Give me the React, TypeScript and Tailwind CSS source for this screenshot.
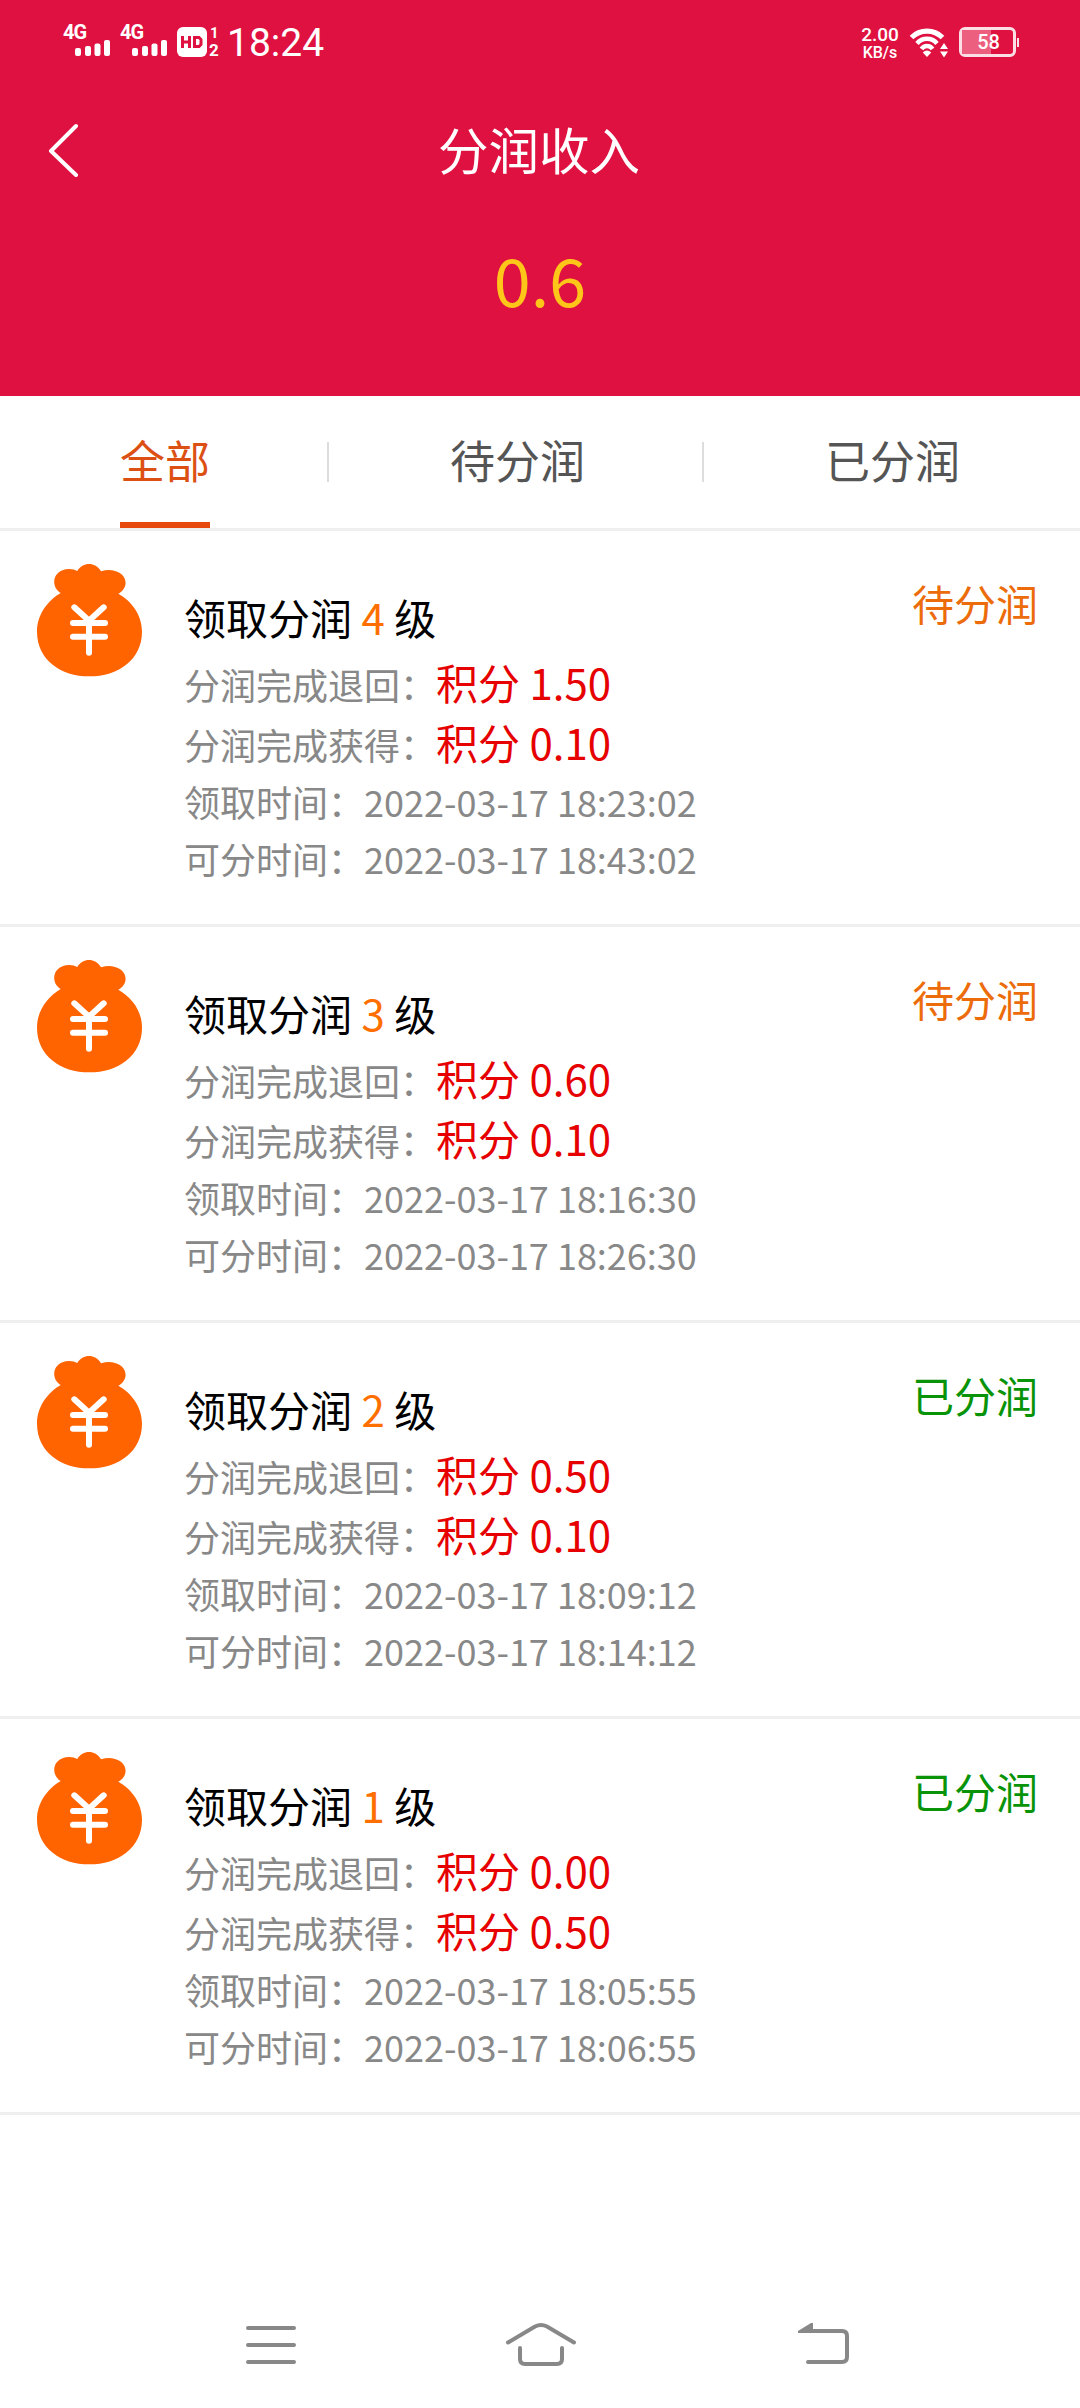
import clsx from 'clsx';

interface RecordItem {
  level: number;
  refund: string;
  reward: string;
  claimedAt: string;
  dueAt: string;
  settled: boolean;
}

const records: RecordItem[] = [
  { level: 4, refund: '1.50', reward: '0.10', claimedAt: '2022-03-17 18:23:02', dueAt: '2022-03-17 18:43:02', settled: false },
  { level: 3, refund: '0.60', reward: '0.10', claimedAt: '2022-03-17 18:16:30', dueAt: '2022-03-17 18:26:30', settled: false },
  { level: 2, refund: '0.50', reward: '0.10', claimedAt: '2022-03-17 18:09:12', dueAt: '2022-03-17 18:14:12', settled: true },
  { level: 1, refund: '0.00', reward: '0.50', claimedAt: '2022-03-17 18:05:55', dueAt: '2022-03-17 18:06:55', settled: true },
];

const tabs = ['全部', '待分润', '已分润'];

function Signal() {
  return (
    <div className="w-[57px] h-[34px] flex flex-col">
      <span className="h-[15px] text-[20px] leading-[15px] font-bold tracking-[-1px]">4G</span>
      <svg className="ml-3 w-9 h-[17px]" viewBox="0 0 36 17" fill="currentColor">
        <rect x="0" y="8" width="6" height="8" rx="2" />
        <rect x="10" y="6" width="6" height="10" rx="2" />
        <rect x="19.500" y="3.500" width="6" height="12.500" rx="2" />
        <rect x="29" y="0" width="6" height="16" rx="2" />
      </svg>
    </div>
  );
}

function StatusBar() {
  return (
    <div className="h-[84px] pl-[63px] pr-[61px] pt-[25px] flex items-start justify-between font-[Roboto,sans-serif]">
      <div className="flex items-start">
        <Signal />
        <Signal />
        <div className="mt-[2px] w-[30px] h-[30px] rounded-[6px] bg-white flex items-center justify-center">
          <svg className="w-[22px] h-[14px]" viewBox="0 0 22 14" fill="none" stroke="#df1140" strokeWidth="3">
            <path d="M1.500 1v12M8.500 1v12M1.500 7h7M13.500 2.500h4.500l2 2v5l-2 2h-4.500z" />
          </svg>
        </div>
        <div className="ml-[2px] w-[13px] flex flex-col text-[17px] leading-[17px] font-bold">
          <span className="pl-[1px] text-[15px]">1</span>
          <span>2</span>
        </div>
        <span className="ml-[5px] mt-[-4px] text-[39px] leading-[44px]">18:24</span>
      </div>
      <div className="flex items-start">
        <div className="w-[40px] mr-[9px] flex flex-col items-center font-medium">
          <span className="text-[19px] leading-[19px]">2.00</span>
          <span className="text-[16px] leading-[17px]">KB/s</span>
        </div>
        <svg className="w-10 h-[30px] mt-[3px] mr-2.5" viewBox="0 0 40 30" fill="none" stroke="currentColor">
          <path d="M2.500 9.500A22.200 22.200 0 0 1 33.500 9.500" strokeWidth="5.200" />
          <path d="M8 15.500A13 13 0 0 1 28 15.500M12.500 21A6.500 6.500 0 0 1 23.500 21" strokeWidth="4.400" />
          <path d="M18 29L13.800 24.500Q18 20.500 22.200 24.500Z" fill="currentColor" stroke="none" />
          <path d="M31 21l4-6 4 6zM31 23.500l4 6 4-6z" fill="currentColor" stroke="none" />
        </svg>
        <div className="mt-[2px] flex items-center">
          <div className="relative w-[57px] h-[30px] rounded-[6px] border-[3px] border-[#fbdfe5]">
            <div className="w-[29px] h-full bg-[#ec5f7f]" />
            <span className="absolute inset-0 pl-[2px] text-center text-[20px] leading-[25px] font-medium">58</span>
          </div>
          <div className="ml-[1px] w-[2px] h-[9px] bg-[#fbdfe5]" />
        </div>
      </div>
    </div>
  );
}

function MoneyBag() {
  return (
    <svg className="w-[107px] h-[114px] mt-[32px] flex-shrink-0" viewBox="108 98 321 342">
      <path
        d="M182 188C152 172 154 117 208 116Q222 116 232 122C248 94 286 94 303 123Q316 119 328 119C384 122 390 172 355 190C394 212 426 252 426 304C426 388 354 438 268 438C182 438 111 388 111 304C111 252 144 210 182 188Z"
        fill="#ff6400"
      />
      <path
        d="M223 231L267 271L311 231M219 278H315M219 319H315M267 271V367"
        fill="none"
        stroke="#fff"
        strokeWidth="18"
        strokeLinecap="round"
      />
    </svg>
  );
}

function RecordRow({ item }: { item: RecordItem }) {
  return (
    <div className="h-[396px] pl-9 pr-[42px] flex items-start border-b-[3px] border-[#efefef]">
      <MoneyBag />
      <div className="ml-[41px] pt-[55px] flex-1 text-[36px] leading-[57px] text-[#888]">
        <div className="h-[66px] text-[42px] leading-[62px] text-black">
          领取分润 <span className="text-[#ff6f00]">{item.level}</span> 级
        </div>
        <div className="h-[60px] leading-[60px]">
          分润完成退回：<span className="text-[42px] text-[#e60000]">积分 {item.refund}</span>
        </div>
        <div className="h-[61px] leading-[60px]">
          分润完成获得：<span className="text-[42px] text-[#e60000]">积分 {item.reward}</span>
        </div>
        <div>领取时间：{item.claimedAt}</div>
        <div>可分时间：{item.dueAt}</div>
      </div>
      <span
        className={clsx(
          'mt-[41px] text-[42px] leading-[62px]',
          item.settled ? 'text-[#089308]' : 'text-[#ec6c0c]',
        )}
      >
        {item.settled ? '已分润' : '待分润'}
      </span>
    </div>
  );
}

function NavBar() {
  return (
    <div className="mt-auto h-[126px] pl-[246px] pt-[41px] flex items-start text-[#888]">
      <svg className="w-[50px] h-[44px]" viewBox="0 0 50 44" fill="none" stroke="currentColor" strokeWidth="4" strokeLinecap="round">
        <path d="M2 5h46M2 22h46M2 39h46" />
      </svg>
      <svg className="ml-[209px] w-[72px] h-[44px]" viewBox="0 0 72 44" fill="none" stroke="currentColor" strokeWidth="4" strokeLinecap="round">
        <path d="M3 19.500L30 3.500Q36 0.700 42 3.500L69 19.500M15 25V36Q15 41 20 41H52Q57 41 57 36V25" />
      </svg>
      <svg className="ml-[221px] w-[52px] h-[44px]" viewBox="0 0 52 44" fill="none" stroke="currentColor" strokeWidth="4" strokeLinecap="round">
        <path d="M10 8H44Q49 8 49 13V34Q49 39 44 39H10" />
        <path d="M0 10V8L13 0H15V10Z" fill="currentColor" stroke="none" />
      </svg>
    </div>
  );
}

export default function App() {
  return (
    <div className="w-[1080px] h-[2408px] flex flex-col bg-white overflow-hidden font-['Noto_Sans_CJK_SC',sans-serif]">
      <header className="h-[396px] bg-[#df1140] text-white">
        <StatusBar />
        <div className="h-[132px] px-12 flex items-center">
          <svg className="w-8 h-[54px]" viewBox="0 0 32 54" fill="none" stroke="currentColor" strokeWidth="4" strokeLinecap="round" strokeLinejoin="round">
            <path d="M28 3L3 28L28 52" />
          </svg>
          <h1 className="flex-1 mr-[34px] mb-[5px] text-center text-[50.500px] leading-[72px]">分润收入</h1>
        </div>
        <div className="pt-[13px] text-center text-[66.500px] leading-[98px] text-[#ffc61a]">0.6</div>
      </header>

      <nav className="h-[135px] flex items-start border-b-[3px] border-[#efefef] text-[45px] text-[#555]">
        {tabs.map((tab, i) => (
          <div key={tab} className="flex items-start">
            <div
              className={clsx(
                'ml-[120px] h-[132px] leading-[128px] border-b-[6px]',
                i === 0 ? 'border-[#e64a0c] text-[#dc5014]' : 'border-transparent',
              )}
            >
              {tab}
            </div>
            {i < 2 && <div className="mt-[46px] ml-[117px] mr-[1px] w-[2px] h-[40px] bg-[#ddd]" />}
          </div>
        ))}
      </nav>

      <main>
        {records.map(item => (
          <RecordRow key={item.level} item={item} />
        ))}
      </main>

      <NavBar />
    </div>
  );
}
